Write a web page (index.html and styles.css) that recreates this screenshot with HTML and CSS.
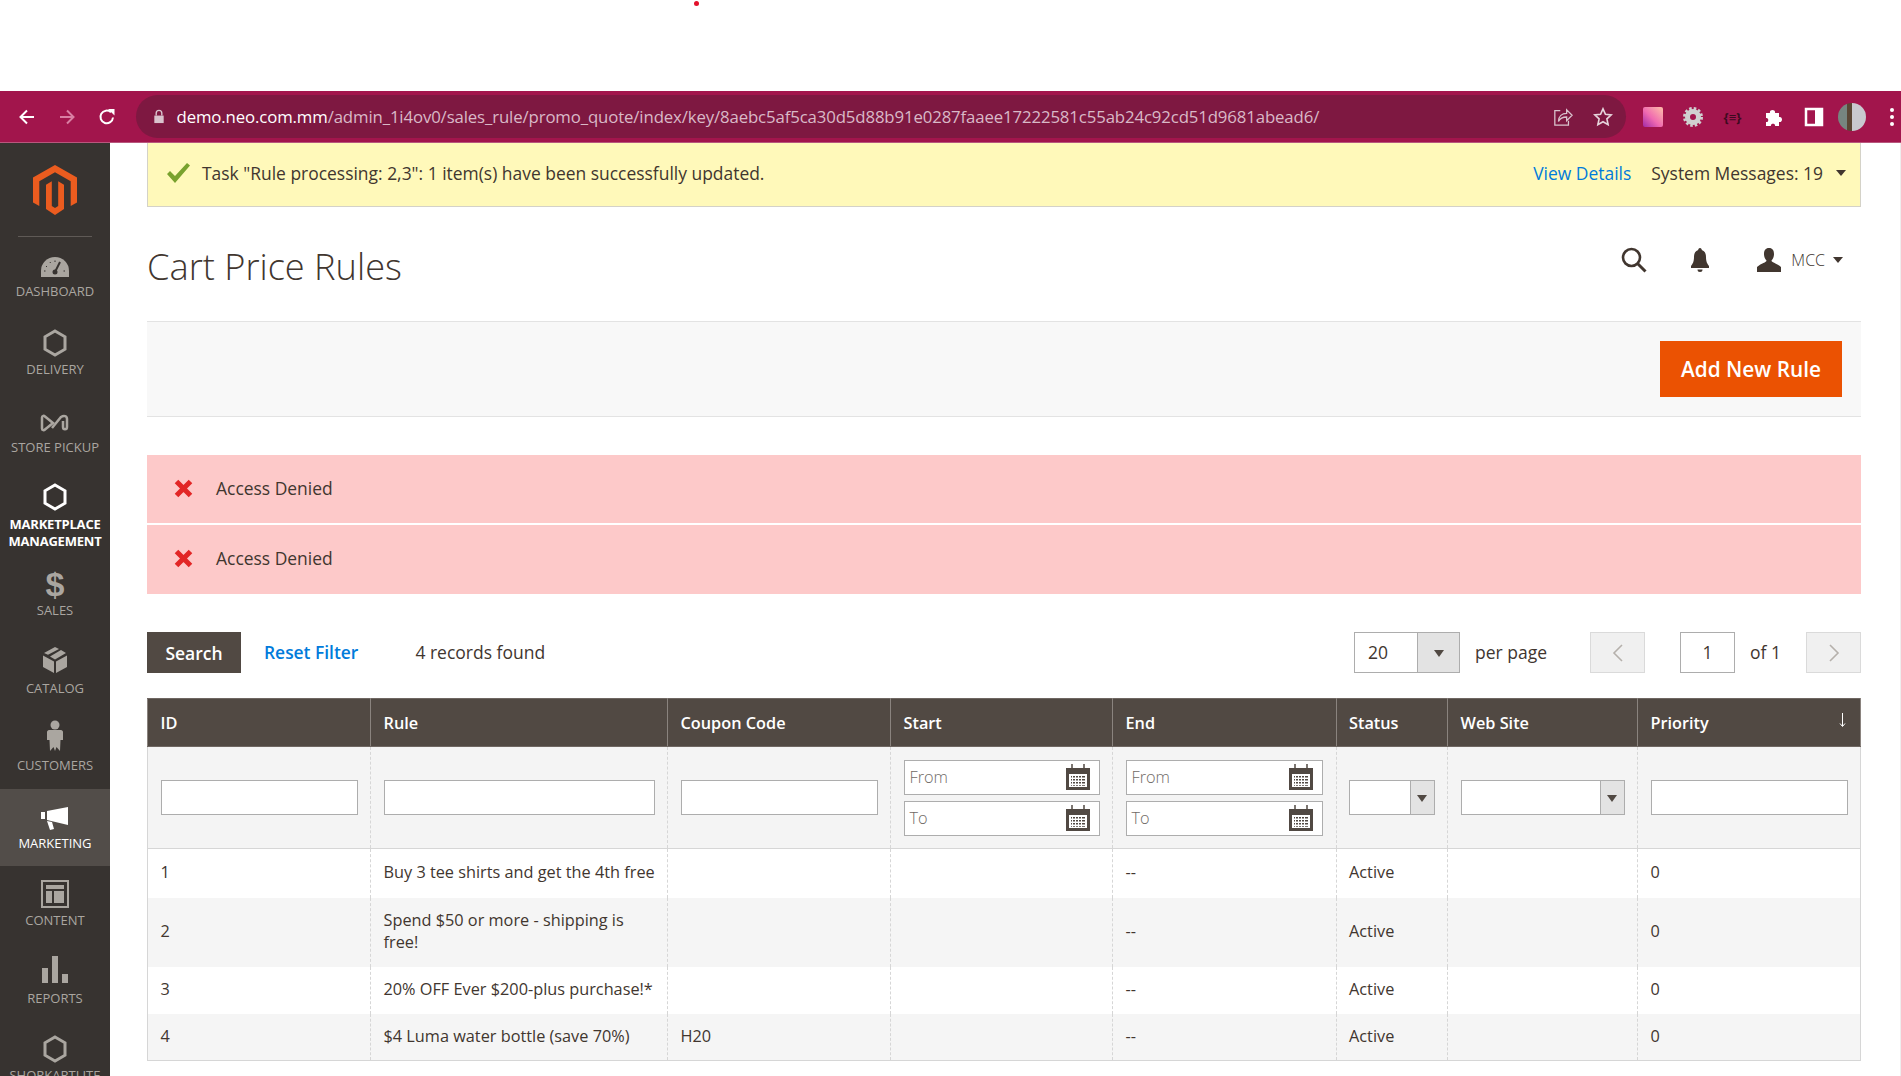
FILE: index.html
```html
<!DOCTYPE html>
<html lang="en">
<head>
    <meta charset="UTF-8">
    <title>Cart Price Rules</title>
    <link rel="stylesheet" href="styles.css">
</head>
<body>
    <svg class="defs" width="0" height="0">
        <symbol id="hex" viewBox="0 0 24 28"><path d="M12 2 22 7.800V20.200L12 26 2 20.200V7.800Z" fill="none" stroke="currentColor" stroke-width="3"/></symbol>
        <symbol id="cal" viewBox="0 0 26 26">
            <path d="M1 4h24v22H1z" fill="#514943"/>
            <path d="M4 10h18v13H4z" fill="#fff"/>
            <path d="M6 12h14v1.600H6zM6 15h14v1.600H6zM6 18h14v1.600H6zM6 21h14v.8H6z" fill="#514943"/>
            <path d="M7.500 12v10M10.500 12v10M13.500 12v10M16.500 12v10" stroke="#fff" stroke-width="1"/>
            <path d="M7 0v6M19 0v6" stroke="#514943" stroke-width="1.500"/>
        </symbol>
        <symbol id="cross" viewBox="0 0 19 19"><path d="M2.500 2.500 16.500 16.500M16.500 2.500 2.500 16.500" stroke="currentColor" stroke-width="5"/></symbol>
    </svg>

    <div class="top-strip"><span class="red-dot"></span></div>

    <div class="browser-bar">
        <svg class="tool" viewBox="0 0 20 20"><path d="M17 10H4M10 3.500 3.500 10 10 16.500" fill="none" stroke="#fff" stroke-width="2"/></svg>
        <svg class="tool dim" viewBox="0 0 20 20"><path d="M3 10h13M10 3.500 16.500 10 10 16.500" fill="none" stroke="#d97fa3" stroke-width="2"/></svg>
        <svg class="tool" viewBox="0 0 20 20"><path d="M16 10.500A6.300 6.300 0 1 1 14 5.300" fill="none" stroke="#fff" stroke-width="2"/><path d="M11 2h6.500v6.500z" fill="#fff"/></svg>
        <div class="omnibox">
            <svg class="lock" viewBox="0 0 12 16"><path d="M3 7V4.500a3 3 0 0 1 6 0V7" fill="none" stroke="#d9c3cd" stroke-width="1.500"/><path d="M1 7h10v8H1z" fill="#d9c3cd"/></svg>
            <span class="url"><b>demo.neo.com.mm</b>/admin_1i4ov0/sales_rule/promo_quote/index/key/8aebc5af5ca30d5d88b91e0287faaee17222581c55ab24c92cd51d9681abead6/</span>
            <svg class="omni-icon share" viewBox="0 0 22 22"><path d="M8 4H2v16h15v-5" fill="none" stroke="#d9c3cd" stroke-width="1.400"/><path d="M6 16c0-6 4-9 9-9V3l6 6-6 6v-4c-4 0-7 1-9 5Z" fill="none" stroke="#d9c3cd" stroke-width="1.400"/></svg>
            <svg class="omni-icon" viewBox="0 0 22 22"><path d="m11 2 2.700 6 6.300.7-4.700 4.300 1.300 6.500L11 16.200 5.400 19.500 6.700 13 2 8.700 8.300 8Z" fill="none" stroke="#e6d5dc" stroke-width="1.800"/></svg>
        </div>
        <div class="ext-icons">
            <span class="ext-gradient"></span>
            <svg class="ext" viewBox="0 0 20 20"><circle cx="10" cy="10" r="5.500" fill="none" stroke="#d0d0d0" stroke-width="5"/><circle cx="10" cy="10" r="8.500" fill="none" stroke="#d0d0d0" stroke-width="3" stroke-dasharray="2.500 2"/></svg>
            <span class="ext-code">{≡}</span>
            <svg class="ext" viewBox="0 0 20 20"><path d="M2 6h4c-1-4 6-4 5 0h4v4c4-1 4 6 0 5v4h-4c1-3-5-3-4 0H2v-4c3 1 3-5 0-4Z" fill="#fff"/></svg>
            <svg class="ext" viewBox="0 0 20 20"><path d="M2 2h16v16H2z" fill="none" stroke="#fff" stroke-width="2.500"/><path d="M11 2h7v16h-7z" fill="#fff"/></svg>
            <span class="avatar"></span>
            <span class="dots"><i></i><i></i><i></i></span>
        </div>
    </div>

    <div class="app">
        <nav class="sidebar">
            <div class="logo">
                <svg class="logo-mark" viewBox="0 0 44 50"><path d="M22 0 0 12.500v25l6.300 3.600V16.200L22 7.200l15.700 9v24.900L44 37.500v-25Z" fill="#eb5c1f"/><path d="M13 19.800V44l9 6 9-6V19.800l-5.800-3.600V41L22 43l-3.200-2V16.200Z" fill="#eb5c1f"/></svg>
            </div>
            <a class="nav-item tall">
                <span class="nav-icon low"><svg width="30" height="20" viewBox="0 0 30 20"><path d="M1 20v-6a14 14 0 0 1 28 0v6Z" fill="currentColor"/><path d="m20 5-4.500 9" stroke="#373330" stroke-width="2"/><circle cx="15" cy="15" r="2.500" fill="#373330"/><path d="M6 9l1 1M10 5l.5 1M15 3.500v1.500M4 14h1.500M25 14h-1.500" stroke="#373330" stroke-width="1"/></svg></span>
                <span class="nav-label">DASHBOARD</span>
            </a>
            <a class="nav-item tall">
                <span class="nav-icon"><svg width="24" height="28"><use href="#hex"/></svg></span>
                <span class="nav-label">DELIVERY</span>
            </a>
            <a class="nav-item tall">
                <span class="nav-icon low"><svg width="30" height="18" viewBox="0 0 30 18"><path d="M2 3.500c0-2 2-2 3-1L13 9l-8 6.500c-1 1-3 1-3-1Z" fill="none" stroke="currentColor" stroke-width="2.500"/><path d="m12 14 9-11c3-2 6-1 6 2v8c0 3-4 3-4 0V7" fill="none" stroke="currentColor" stroke-width="2.500"/></svg></span>
                <span class="nav-label">STORE PICKUP</span>
            </a>
            <a class="nav-item double current">
                <span class="nav-icon high"><svg width="24" height="28"><use href="#hex"/></svg></span>
                <span class="nav-label">MARKETPLACE MANAGEMENT</span>
            </a>
            <a class="nav-item">
                <span class="nav-icon dollar">$</span>
                <span class="nav-label">SALES</span>
            </a>
            <a class="nav-item">
                <span class="nav-icon high"><svg width="24" height="26" viewBox="0 0 24 26"><path d="M0 8.500 11 14.500V26L0 20ZM24 8.500 13 14.500V26l11-6ZM12 0l4 2-11 5.800L1 6ZM18 3l5 3-11 6.500-5-3Z" fill="currentColor"/></svg></span>
                <span class="nav-label">CATALOG</span>
            </a>
            <a class="nav-item">
                <span class="nav-icon higher"><svg width="16" height="32" viewBox="0 0 16 32"><circle cx="8" cy="5" r="4.500" fill="currentColor"/><path d="M2 10h12c1 0 2 1 2 2v8h-2.500L13 31l-3.500-4L8 31l-1.500-4L3 31l-.5-11H0v-8c0-1 1-2 2-2Z" fill="currentColor"/></svg></span>
                <span class="nav-label">CUSTOMERS</span>
            </a>
            <a class="nav-item active">
                <span class="nav-icon low"><svg width="28" height="24" viewBox="0 0 28 24"><path d="M6 4 27 0v18L6 13Z" fill="#fff"/><path d="M0 5h4v7H0z" fill="#fff"/><path d="m6 14 5 1 2 7-4 1Z" fill="#fff"/></svg></span>
                <span class="nav-label">MARKETING</span>
            </a>
            <a class="nav-item">
                <span class="nav-icon"><svg width="28" height="28" viewBox="0 0 28 28"><path d="M1 1h26v26H1z" fill="none" stroke="currentColor" stroke-width="2"/><path d="M5 5h18v4H5zM5 11h6v12H5zM13 11h10v12H13z" fill="currentColor"/></svg></span>
                <span class="nav-label">CONTENT</span>
            </a>
            <a class="nav-item">
                <span class="nav-icon high"><svg width="26" height="27" viewBox="0 0 26 27"><path d="M0 12h6v15H0zM10 0h6v27h-6zM20 18h6v9h-6z" fill="currentColor"/></svg></span>
                <span class="nav-label">REPORTS</span>
            </a>
            <a class="nav-item">
                <span class="nav-icon"><svg width="24" height="28"><use href="#hex"/></svg></span>
                <span class="nav-label">SHORKARTLITE</span>
            </a>
        </nav>

        <main class="content">
            <div class="notice">
                <svg class="notice-check" viewBox="0 0 24 20"><path d="M1 11 4 8l5 5L21 0l3 2.500L9 20Z" fill="#79a22e"/></svg>
                <span class="notice-text">Task "Rule processing: 2,3": 1 item(s) have been successfully updated.</span>
                <a class="link view-details">View Details</a>
                <span class="notice-count">System Messages: 19</span>
                <span class="caret"></span>
            </div>

            <header class="page-header">
                <h1 class="page-title">Cart Price Rules</h1>
                <div class="page-tools">
                    <svg class="tool-search" viewBox="0 0 26 26"><circle cx="10.500" cy="10.500" r="8.500" fill="none" stroke="#41362f" stroke-width="2.600"/><path d="m16.500 16.500 8 8" stroke="#41362f" stroke-width="3"/></svg>
                    <svg class="tool-bell" viewBox="0 0 20 24"><path d="M10 0c1.200 0 1.800 1 1.800 2C15 3 16 6 16 9c0 5 1.500 7 3 9v2H1v-2c1.500-2 3-4 3-9 0-3 1-6 4.200-7C8.200 1 8.800 0 10 0Z" fill="#41362f"/><path d="M7.500 21.500h5a2.500 2.500 0 0 1-5 0Z" fill="#41362f"/></svg>
                    <svg class="tool-user" viewBox="0 0 24 24"><path d="M12 0c3.500 0 5 2.500 5 6 0 3-1 5-2.500 6.500 0 2 5 2.500 9.500 6.500v5H0v-5c4.500-4 9.500-4.500 9.500-6.500C8 11 7 9 7 6c0-3.500 1.500-6 5-6Z" fill="#41362f"/></svg>
                    <span class="user-name">MCC</span>
                    <span class="caret small"></span>
                </div>
            </header>

            <div class="action-bar">
                <button class="btn-primary">Add New Rule</button>
            </div>

            <div class="messages">
                <div class="message"><svg class="message-x"><use href="#cross"/></svg>Access Denied</div>
                <div class="message"><svg class="message-x"><use href="#cross"/></svg>Access Denied</div>
            </div>

            <div class="grid-tools">
                <button class="btn-search">Search</button>
                <a class="link reset-filter">Reset Filter</a>
                <span class="records">4 records found</span>
                <div class="pager">
                    <div class="select per-page"><span class="select-value">20</span><span class="select-arrow"></span></div>
                    <span class="pager-text per-page-text">per page</span>
                    <button class="pager-btn"><svg width="12" height="18" viewBox="0 0 12 18"><path d="M10 1 2 9l8 8" fill="none" stroke="#b5b0ab" stroke-width="1.600"/></svg></button>
                    <span class="page-box">1</span>
                    <span class="pager-text">of 1</span>
                    <button class="pager-btn"><svg width="12" height="18" viewBox="0 0 12 18"><path d="m2 1 8 8-8 8" fill="none" stroke="#b5b0ab" stroke-width="1.600"/></svg></button>
                </div>
            </div>

            <table class="grid">
                <colgroup>
                    <col class="col-id"><col class="col-rule"><col class="col-code"><col class="col-start"><col class="col-end"><col class="col-status"><col class="col-site"><col class="col-priority">
                </colgroup>
                <thead>
                    <tr class="head-row">
                        <th>ID</th><th>Rule</th><th>Coupon Code</th><th>Start</th><th>End</th><th>Status</th><th>Web Site</th><th class="sorted">Priority<svg class="sort-arrow" viewBox="0 0 7 14"><path d="M3.500 0v13M1 10.500l2.500 3 2.500-3" fill="none" stroke="#fff" stroke-width="1"/></svg></th>
                    </tr>
                    <tr class="filter-row">
                        <td><input class="field"></td>
                        <td><input class="field"></td>
                        <td><input class="field"></td>
                        <td>
                            <div class="date-field"><span>From</span><svg class="cal"><use href="#cal"/></svg></div>
                            <div class="date-field"><span>To</span><svg class="cal"><use href="#cal"/></svg></div>
                        </td>
                        <td>
                            <div class="date-field"><span>From</span><svg class="cal"><use href="#cal"/></svg></div>
                            <div class="date-field"><span>To</span><svg class="cal"><use href="#cal"/></svg></div>
                        </td>
                        <td><div class="select filter-select"><span class="select-arrow"></span></div></td>
                        <td><div class="select filter-select"><span class="select-arrow"></span></div></td>
                        <td><input class="field"></td>
                    </tr>
                </thead>
                <tbody>
                    <tr class="row-a">
                        <td>1</td><td>Buy 3 tee shirts and get the 4th free</td><td></td><td></td><td>--</td><td>Active</td><td></td><td>0</td>
                    </tr>
                    <tr class="row-b">
                        <td>2</td><td>Spend $50 or more - shipping is free!</td><td></td><td></td><td>--</td><td>Active</td><td></td><td>0</td>
                    </tr>
                    <tr class="row-c">
                        <td>3</td><td>20% OFF Ever $200-plus purchase!*</td><td></td><td></td><td>--</td><td>Active</td><td></td><td>0</td>
                    </tr>
                    <tr class="row-d">
                        <td>4</td><td>$4 Luma water bottle (save 70%)</td><td>H20</td><td></td><td>--</td><td>Active</td><td></td><td>0</td>
                    </tr>
                </tbody>
            </table>
        </main>
        <div class="scroll-strip"></div>
    </div>
</body>
</html>
```

FILE: styles.css
```css
* {
    box-sizing: border-box;
}

body {
    margin: 0;
    height: 1076px;
    overflow: hidden;
    background-color: #fff;
    font-family: "Open Sans", sans-serif;
    color: #41362f;
    font-size: 16.3px;
}

.defs {
    position: absolute;
}

.top-strip {
    height: 91px;
    position: relative;
}

.red-dot {
    position: absolute;
    left: 694px;
    top: 1px;
    width: 5px;
    height: 5px;
    border-radius: 50%;
    background-color: #e3112b;
}

/* browser chrome */
.browser-bar {
    height: 52px;
    background-color: #a2154c;
    display: flex;
    align-items: center;
    padding-left: 17px;
    border-bottom: 1px solid #b8577d;
}

.tool {
    width: 20px;
    height: 20px;
    margin-right: 20px;
}

.omnibox {
    flex: none;
    width: 1490px;
    height: 43px;
    margin-left: -1.500px;
    background-color: #7e1841;
    border-radius: 22px;
    display: flex;
    align-items: center;
    padding: 0 13px 0 17px;
}

.lock {
    width: 12px;
    height: 15px;
    margin-right: 12px;
}

.url {
    flex: 1;
    color: #d9b9c7;
    font-size: 16.8px;
    white-space: nowrap;
    letter-spacing: -0.13px;
}

.url b {
    font-weight: 400;
    color: #fff;
}

.omni-icon {
    width: 20px;
    height: 20px;
    margin-left: 20px;
}

.ext-icons {
    display: flex;
    align-items: center;
    margin-left: 17px;
}

.ext-gradient {
    width: 20px;
    height: 20px;
    border-radius: 2px;
    background: linear-gradient(45deg, #a12aa8, #f06ab0 45%, #ffc0a8);
    margin-right: 20px;
}

.ext {
    width: 20px;
    height: 20px;
    margin-right: 20px;
}

.ext-code {
    width: 20px;
    margin-right: 21px;
    font-size: 13px;
    font-weight: 700;
    color: #3d0a20;
    text-align: center;
    white-space: nowrap;
}

.avatar {
    width: 28px;
    height: 28px;
    border-radius: 50%;
    background: linear-gradient(90deg, #76857f 0 33%, #5a4634 33% 50%, #c9c9cf 50%);
    margin-left: -6px;
}

.dots {
    display: flex;
    flex-direction: column;
    gap: 3px;
    margin-left: 24px;
}

.dots i {
    width: 4px;
    height: 4px;
    border-radius: 50%;
    background-color: #fff;
}

.app {
    display: flex;
    height: 933px;
}

.scroll-strip {
    flex: none;
    width: 2px;
    background-color: #eeeeee;
}

/* left menu */
.sidebar {
    flex: none;
    width: 110px;
    background-color: #373330;
    color: #aaa6a0;
    overflow: hidden;
}

.logo {
    height: 94px;
    margin: 0 18px;
    border-bottom: 1px solid #5f5a56;
    padding-top: 22px;
    display: flex;
    justify-content: center;
    align-items: flex-start;
}

.logo-mark {
    width: 44px;
    height: 50px;
}

.nav-item {
    height: 77.5px;
    padding-top: 13px;
    display: flex;
    flex-direction: column;
    align-items: center;
}

.nav-item.tall {
    height: 78px;
}

.nav-item.double {
    height: 85px;
}

.nav-icon {
    height: 30px;
    display: flex;
    align-items: center;
    justify-content: center;
}

.nav-icon.low {
    padding-top: 4px;
}

.nav-icon.high {
    padding-bottom: 4px;
}

.nav-icon.higher {
    padding-bottom: 7px;
}

.nav-label {
    margin-top: 3px;
    font-size: 13px;
    line-height: 17px;
    text-align: center;
    white-space: nowrap;
}

.nav-item.double .nav-label {
    white-space: normal;
    margin-top: 2px;
}

.nav-item.current {
    color: #fff;
}

.nav-item.current .nav-label {
    font-weight: 700;
    letter-spacing: -0.2px;
}

.nav-item.active {
    background-color: #524d49;
    color: #fff;
}

.dollar {
    font-size: 34px;
    font-weight: 800;
    font-family: "Liberation Sans", sans-serif;
}

/* content */
.content {
    flex: 1;
    padding: 0 39px 0 37px;
}

.link {
    color: #007bdb;
}

.notice {
    height: 64px;
    background-color: #fff9ba;
    border: 1px solid #d4d2c8;
    border-top: none;
    display: flex;
    align-items: center;
    padding: 0 14px 3px 18px;
    font-size: 17.45px;
}

.notice-check {
    width: 24px;
    height: 20px;
    margin-right: 12px;
}

.notice-text {
    flex: 1;
}

.view-details {
    margin-right: 20px;
}

.caret {
    width: 0;
    height: 0;
    margin-left: 13px;
    border-left: 5.500px solid transparent;
    border-right: 5.500px solid transparent;
    border-top: 6px solid #41362f;
}

.caret.small {
    margin-left: 8px;
}

.page-header {
    height: 114px;
    display: flex;
    justify-content: space-between;
    padding-right: 18px;
}

.page-title {
    margin: 39px 0 0;
    font-size: 36.200px;
    font-weight: 300;
    line-height: 40px;
}

.page-tools {
    display: flex;
    align-items: center;
    height: 106px;
}

.tool-search {
    width: 26px;
    height: 26px;
    margin-right: 43px;
}

.tool-bell {
    width: 20px;
    height: 24px;
    margin-right: 47px;
}

.tool-user {
    width: 24px;
    height: 24px;
    margin-right: 10px;
}

.user-name {
    font-size: 16px;
    font-weight: 300;
}

.action-bar {
    height: 96px;
    background-color: #f8f8f8;
    border-top: 1px solid #e3e3e3;
    border-bottom: 1px solid #e3e3e3;
    display: flex;
    justify-content: flex-end;
    align-items: center;
    padding-right: 19px;
}

.btn-primary {
    width: 182px;
    height: 56px;
    border: none;
    background-color: #eb5202;
    color: #fff;
    font-family: inherit;
    font-size: 20.800px;
    font-weight: 600;
}

.messages {
    margin-top: 38px;
    display: flex;
    flex-direction: column;
    gap: 2px;
}

.message {
    height: 68px;
    background-color: #fdc9c9;
    display: flex;
    align-items: center;
    padding: 0 0 2px 27px;
    font-size: 17.45px;
    color: #41362f;
}

.message + .message {
    height: 69px;
    padding-bottom: 3px;
}

.message-x {
    width: 19px;
    height: 19px;
    margin-right: 23px;
    color: #e22626;
}

.grid-tools {
    margin-top: 38px;
    height: 41px;
    display: flex;
    align-items: center;
    font-size: 17.500px;
}

.btn-search {
    width: 94px;
    height: 41px;
    border: none;
    background-color: #514943;
    color: #fff;
    font-family: inherit;
    font-size: 17.500px;
    font-weight: 600;
}

.reset-filter {
    margin: 0 0 2px 23px;
    font-weight: 600;
    font-size: 17.400px;
}

.records {
    margin: 0 0 2px 57px;
}

.pager {
    margin-left: auto;
    display: flex;
    align-items: center;
}

.select {
    position: relative;
    background-color: #fff;
    border: 1px solid #adadad;
}

.per-page {
    width: 106px;
    height: 41px;
    padding-left: 13px;
    line-height: 38px;
}

.select-arrow {
    position: absolute;
    top: 0;
    right: 0;
    bottom: 0;
    width: 24px;
    background-color: #e3e3e3;
    border-left: 1px solid #adadad;
}

.per-page .select-arrow {
    width: 42px;
}

.select-arrow::after {
    content: "";
    position: absolute;
    left: 50%;
    top: 50%;
    margin: -3px 0 0 -5px;
    border-left: 5px solid transparent;
    border-right: 5px solid transparent;
    border-top: 7px solid #514943;
}

.pager-text {
    margin: 0 0 2px 15px;
}

.per-page-text {
    width: 95px;
}

.pager-btn {
    width: 55px;
    height: 41px;
    background-color: #f0f0f0;
    border: 1px solid #dadada;
    padding: 0;
    display: flex;
    align-items: center;
    justify-content: center;
}

.page-box {
    width: 55px;
    height: 41px;
    margin-left: 35px;
    border: 1px solid #adadad;
    text-align: center;
    line-height: 38px;
}

.pager-text + .pager-btn {
    margin-left: 25px;
}

.per-page-text + .pager-btn {
    margin-left: 20px;
}

/* table */
.grid {
    margin-top: 25px;
    width: 100%;
    table-layout: fixed;
    border-collapse: collapse;
    font-size: 16.300px;
}

.col-id { width: 223px; }
.col-rule { width: 297px; }
.col-code { width: 223px; }
.col-start { width: 222px; }
.col-end { width: 223.500px; }
.col-status { width: 111.500px; }
.col-site { width: 190px; }
.col-priority { width: 223px; }

.grid th,
.grid td {
    padding: 0 8px 2px 12.500px;
    vertical-align: middle;
    text-align: left;
    border-left: 1px dashed #d6d6d6;
    border-right: 1px dashed #d6d6d6;
}

.grid tr > :first-child {
    border-left: 1px solid #d6d6d6;
}

.grid tr > :last-child {
    border-right: 1px solid #d6d6d6;
}

.head-row {
    height: 48px;
}

.grid .head-row th {
    padding-bottom: 0;
    background-color: #514943;
    color: #fff;
    font-weight: 600;
    border: 1px solid #8a837e;
    border-top-color: #6f6762;
    border-bottom-color: #6f6762;
}

.sorted {
    position: relative;
}

.sort-arrow {
    position: absolute;
    right: 14px;
    top: 14px;
    width: 7px;
    height: 14px;
}

.filter-row {
    height: 102px;
    background-color: #f4f4f4;
    border-bottom: 1px solid #d6d6d6;
}

.grid .filter-row td {
    padding: 0 12.500px;
}

.field {
    display: block;
    width: 100%;
    height: 35px;
    border: 1px solid #adadad;
    background-color: #fff;
}

.date-field {
    height: 35px;
    background-color: #fff;
    border: 1px solid #adadad;
    display: flex;
    align-items: center;
    justify-content: space-between;
    padding: 0 8px 0 5px;
    color: #6f6a66;
    font-weight: 300;
}

.date-field span {
    margin-bottom: 1px;
}

.date-field + .date-field {
    margin-top: 6px;
}

.cal {
    width: 26px;
    height: 26px;
}

.filter-select {
    height: 35px;
}

.row-a { height: 49px; }
.row-b { height: 69px; background-color: #f5f5f5; }
.row-c { height: 47px; }
.row-d { height: 47px; background-color: #f5f5f5; border-bottom: 1px solid #d6d6d6; }

.row-b td {
    line-height: 22px;
}
```
